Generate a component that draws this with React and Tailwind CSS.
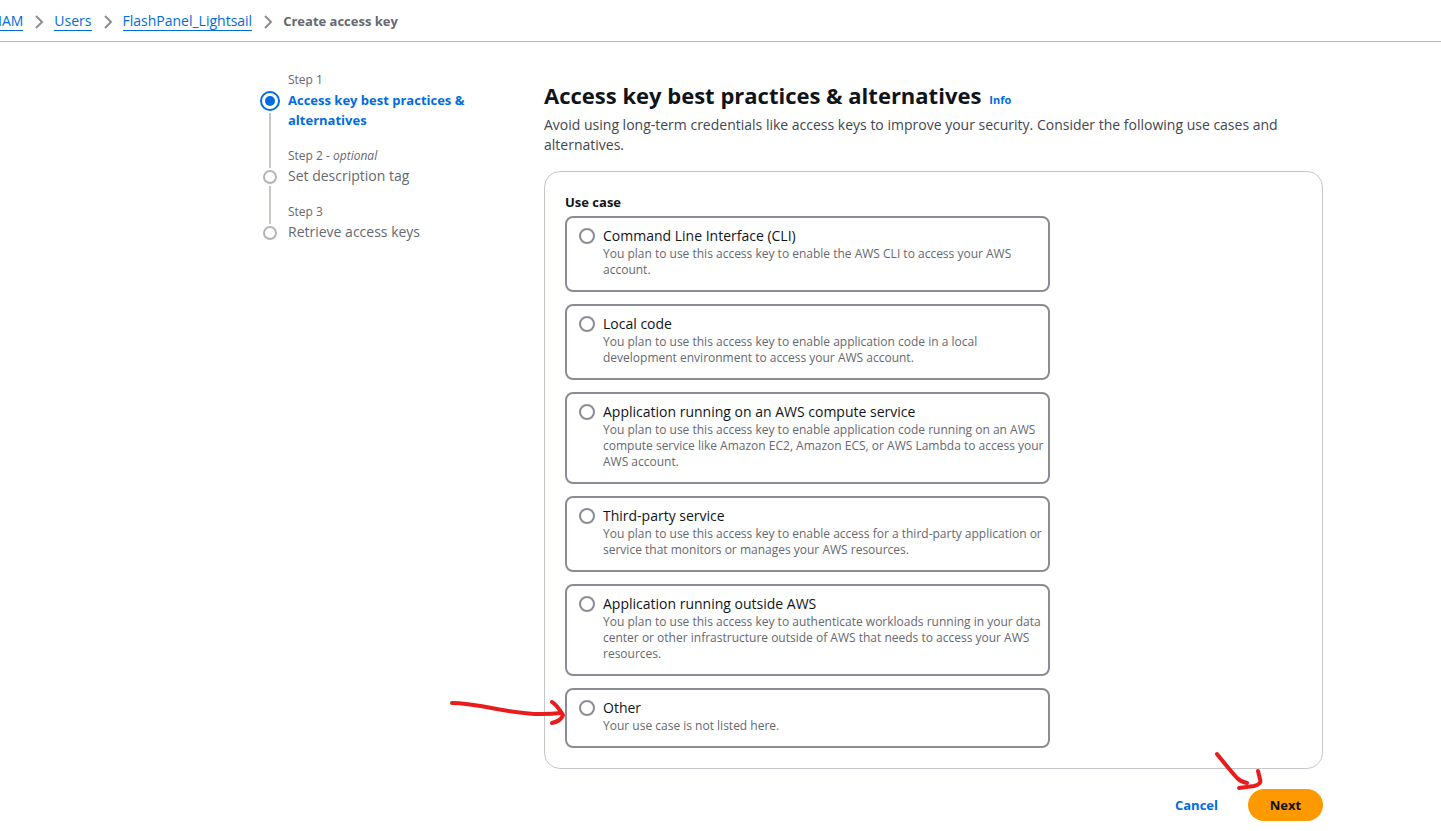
import { Fragment, useState } from "react";

const crumbs = ["IAM", "Users", "FlashPanel_Lightsail"];

const steps = [
  { label: "Step 1", title: ["Access key best practices &", "alternatives"], active: true },
  { label: "Step 2", optional: true, title: ["Set description tag"] },
  { label: "Step 3", title: ["Retrieve access keys"] },
];

const useCases = [
  {
    id: "cli",
    title: "Command Line Interface (CLI)",
    lines: ["You plan to use this access key to enable the AWS CLI to access your AWS", "account."],
  },
  {
    id: "local",
    title: "Local code",
    lines: [
      "You plan to use this access key to enable application code in a local",
      "development environment to access your AWS account.",
    ],
  },
  {
    id: "compute",
    title: "Application running on an AWS compute service",
    lines: [
      "You plan to use this access key to enable application code running on an AWS",
      "compute service like Amazon EC2, Amazon ECS, or AWS Lambda to access your",
      "AWS account.",
    ],
  },
  {
    id: "third-party",
    title: "Third-party service",
    lines: [
      "You plan to use this access key to enable access for a third-party application or",
      "service that monitors or manages your AWS resources.",
    ],
  },
  {
    id: "outside",
    title: "Application running outside AWS",
    lines: [
      "You plan to use this access key to authenticate workloads running in your data",
      "center or other infrastructure outside of AWS that needs to access your AWS",
      "resources.",
    ],
  },
  { id: "other", title: "Other", lines: ["Your use case is not listed here."], marked: true },
];

function Lines({ lines }) {
  return lines.map((line, i) => (
    <Fragment key={line}>
      {i > 0 && <br />}
      {line}
    </Fragment>
  ));
}

function Breadcrumbs() {
  return (
    <nav aria-label="Breadcrumbs" className="overflow-hidden border-b border-[#b4b4bb] pt-3 pb-[10px]">
      <ol className="-ml-0.5 flex items-center text-sm leading-[19px]">
        {crumbs.map((name) => (
          <li key={name} className="flex items-center">
            <a href="#" className="border-b border-[#006ce0] leading-[18px] text-[#006ce0]">
              {name}
            </a>
            <svg className="mr-[7px] ml-2 size-4" viewBox="0 0 16 16" fill="none" stroke="#8c8c94" strokeWidth="2" aria-hidden="true">
              <path d="M5 2l6 6-6 6" />
            </svg>
          </li>
        ))}
        <li className="text-[13px] font-bold text-[#656871]" aria-current="page">
          Create access key
        </li>
      </ol>
    </nav>
  );
}

function Steps() {
  return (
    <ol className="w-[284px] shrink-0">
      {steps.map((step, i) => {
        const last = i === steps.length - 1;
        return (
          <li key={step.label} className="flex gap-2">
            <div className="flex w-5 shrink-0 flex-col items-center">
              {step.active ? (
                <>
                  <div className="h-[18px]" />
                  <svg className="h-[23px] w-5" viewBox="0 0 20 23" fill="none" aria-hidden="true">
                    <circle cx="10" cy="11" r="9" stroke="#006ce0" strokeWidth="2" />
                    <circle cx="10" cy="11" r="5" fill="#006ce0" />
                  </svg>
                </>
              ) : (
                <>
                  <div className="h-5 w-0.5 bg-[#c6c6cd]" />
                  <svg className="h-[18px] w-5" viewBox="0 0 20 18" fill="none" aria-hidden="true">
                    <circle cx="10" cy="9" r="6" stroke="#b4b4bb" strokeWidth="2" />
                  </svg>
                </>
              )}
              {!last && <div className="w-0.5 flex-1 bg-[#c6c6cd]" />}
            </div>
            <div className={last ? "" : "pb-[18px]"}>
              <div className="text-xs leading-4 text-[#656871]">
                {step.label}
                {step.optional && (
                  <>
                    {" - "}
                    <em>optional</em>
                  </>
                )}
              </div>
              <a
                href="#"
                className={
                  step.active
                    ? "mt-0.5 block text-[13px] leading-5 font-bold whitespace-nowrap text-[#006ce0]"
                    : "mt-0.5 block text-sm leading-5 whitespace-nowrap text-[#656871]"
                }
              >
                <Lines lines={step.title} />
              </a>
            </div>
          </li>
        );
      })}
    </ol>
  );
}

function Tile({ item, checked, onChange }) {
  return (
    <label
      htmlFor={item.id}
      className="relative flex gap-2 rounded-lg border-2 border-[#8c8c94] px-3 pt-2 pb-3"
    >
      <input
        id={item.id}
        type="radio"
        name="use-case"
        checked={checked}
        onChange={onChange}
        className="mt-0.5 size-4 shrink-0 appearance-none rounded-full border-2 border-[#8c8c94] bg-white checked:border-[5px] checked:border-[#006ce0]"
      />
      <span className="block whitespace-nowrap">
        <span className="block text-sm leading-5 text-[#0f141a]">{item.title}</span>
        <span className="block text-xs leading-4 text-[#656871]">
          <Lines lines={item.lines} />
        </span>
      </span>
      {item.marked && (
        <svg
          className="pointer-events-none absolute top-1 -left-[122px] h-10 w-[125px]"
          viewBox="0 0 125 40"
          fill="none"
          stroke="#e81c1c"
          strokeWidth="4"
          strokeLinecap="round"
          strokeLinejoin="round"
          aria-hidden="true"
        >
          <path d="M7 9C34 9 62 20 96 20Q107 20 116 19" />
          <path d="M107 8Q111 10 118 21Q116 27 107 29" />
        </svg>
      )}
    </label>
  );
}

export default function App() {
  const [selected, setSelected] = useState(null);
  return (
    <div className="bg-white font-['Open_Sans',sans-serif] text-[#0f141a]">
      <Breadcrumbs />
      <div className="flex pt-[30px] pr-[118px] pb-[10px] pl-[260px]">
        <Steps />
        <main className="min-w-0 flex-1 pt-2">
          <div className="flex items-baseline gap-2">
            <h1 className="text-[22px] leading-[30px] font-bold">Access key best practices &amp; alternatives</h1>
            <a href="#" className="text-[11px] font-bold text-[#006ce0]">
              Info
            </a>
          </div>
          <p className="mt-[5px] text-sm leading-5 text-[#424650]">
            Avoid using long-term credentials like access keys to improve your security. Consider the following use
            cases and <br />
            alternatives.
          </p>
          <form className="mt-4">
            <fieldset className="rounded-2xl border border-[#c6c6cd] p-5">
              <legend className="float-left w-full text-[13px] leading-5 font-bold">Use case</legend>
              <div className="clear-both flex max-w-[485px] flex-col gap-3 pt-1">
                {useCases.map((item) => (
                  <Tile
                    key={item.id}
                    item={item}
                    checked={selected === item.id}
                    onChange={() => setSelected(item.id)}
                  />
                ))}
              </div>
            </fieldset>
            <div className="mt-5 flex items-center justify-end gap-[30px] text-[13px] leading-5 font-bold">
              <button type="button" className="text-[#006ce0]">
                Cancel
              </button>
              <div className="relative">
                <button type="submit" className="h-8 w-[75px] rounded-full bg-[#ff9900]">
                  Next
                </button>
                <svg
                  className="pointer-events-none absolute -top-[40px] -left-[38px] h-11 w-14"
                  viewBox="0 0 56 44"
                  fill="none"
                  stroke="#e81c1c"
                  strokeWidth="4"
                  strokeLinecap="round"
                  strokeLinejoin="round"
                  aria-hidden="true"
                >
                  <path d="M7 5Q19 20 27 29Q31 33 37 34" />
                  <path d="M29 39L44 37Q52 35 50 30L48 22" />
                </svg>
              </div>
            </div>
          </form>
        </main>
      </div>
    </div>
  );
}
